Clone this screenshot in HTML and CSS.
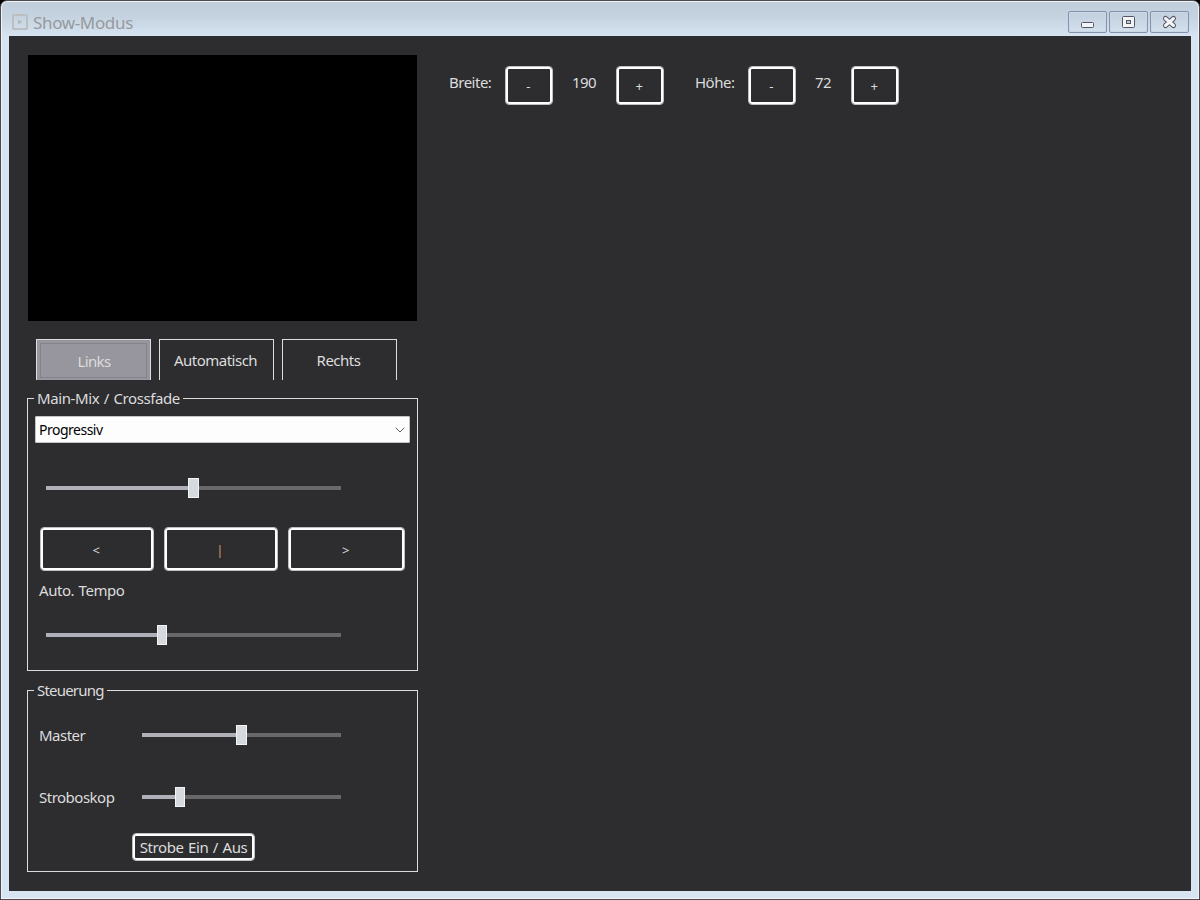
FILE: index.html
```html
<!DOCTYPE html>
<html lang="de">
<head>
    <meta charset="UTF-8">
    <meta name="viewport" content="width=device-width, initial-scale=1.0">
    <title>Show-Modus</title>
    <link rel="stylesheet" href="styles.css">
</head>
<body>
    <div class="window">
        <header class="titlebar">
            <svg class="app-icon" width="16" height="16" viewBox="0 0 16 16">
                <rect x="1" y="1" width="14" height="14" rx="1" fill="none" stroke="#bdbebf" stroke-width="2"/>
                <path d="M6 5.500v5l4.500-2.500z" fill="#b7b9bb"/>
            </svg>
            <h1>Show-Modus</h1>
            <div class="window-buttons">
                <button class="win-btn" aria-label="Minimieren">
                    <svg width="37" height="20" viewBox="0 0 37 20">
                        <rect x="12.500" y="10.500" width="12" height="5" rx="1" fill="#f4f4f4" stroke="#535666"/>
                    </svg>
                </button>
                <button class="win-btn" aria-label="Maximieren">
                    <svg width="37" height="20" viewBox="0 0 37 20">
                        <rect x="12.500" y="4.500" width="12" height="11" rx="1" fill="#f4f4f4" stroke="#535666"/>
                        <rect x="16.500" y="8.500" width="4" height="3" fill="#b9cbe0" stroke="#535666"/>
                    </svg>
                </button>
                <button class="win-btn" aria-label="Schließen">
                    <svg width="37" height="20" viewBox="0 0 37 20">
                        <path d="M14.500 6.500l8 7M22.500 6.500l-8 7" stroke="#535666" stroke-width="5" stroke-linecap="round"/>
                        <path d="M14.500 6.500l8 7M22.500 6.500l-8 7" stroke="#f4f4f4" stroke-width="3" stroke-linecap="round"/>
                    </svg>
                </button>
            </div>
        </header>

        <main class="client">
            <section class="left">
                <div class="preview"></div>

                <div class="tabs">
                    <button class="tab active"><span>Links</span></button>
                    <button class="tab">Automatisch</button>
                    <button class="tab">Rechts</button>
                </div>

                <fieldset class="group mix">
                    <legend>Main-Mix / Crossfade</legend>
                    <div class="combo">
                        <span>Progressiv</span>
                        <svg width="10" height="6" viewBox="0 0 10 6">
                            <path d="M.7.7L5 5 9.300.7" fill="none" stroke="#606060"/>
                        </svg>
                    </div>
                    <div class="slider fade">
                        <div class="fill" style="width: 142px"></div>
                        <div class="thumb wide"></div>
                        <div class="rest"></div>
                    </div>
                    <div class="fade-buttons">
                        <button class="btn">&lt;</button>
                        <button class="btn bar">|</button>
                        <button class="btn">&gt;</button>
                    </div>
                    <div class="label tempo-label">Auto. Tempo</div>
                    <div class="slider tempo">
                        <div class="fill" style="width: 111px"></div>
                        <div class="thumb"></div>
                        <div class="rest"></div>
                    </div>
                </fieldset>

                <fieldset class="group control">
                    <legend>Steuerung</legend>
                    <div class="row">
                        <span class="label">Master</span>
                        <div class="slider">
                            <div class="fill" style="width: 94px"></div>
                            <div class="thumb wide"></div>
                            <div class="rest"></div>
                        </div>
                    </div>
                    <div class="row">
                        <span class="label">Stroboskop</span>
                        <div class="slider">
                            <div class="fill" style="width: 33px"></div>
                            <div class="thumb"></div>
                            <div class="rest"></div>
                        </div>
                    </div>
                    <button class="btn strobe-btn">Strobe Ein / Aus</button>
                </fieldset>
            </section>

            <section class="size-bar">
                <span class="label">Breite:</span>
                <button class="btn">-</button>
                <span class="value">190</span>
                <button class="btn">+</button>
                <span class="label height-label">Höhe:</span>
                <button class="btn">-</button>
                <span class="value">72</span>
                <button class="btn">+</button>
            </section>
        </main>
    </div>
</body>
</html>
```

FILE: styles.css
```css
:root {
    --bg: #2d2d30;
    --text: #dcdcdc;
    --frame: #d7e4f2;
    --line: #dcdcdc;
}

* {
    box-sizing: border-box;
}

body {
    margin: 0;
    background: #000;
    color: var(--text);
    font-family: "Noto Sans", "Open Sans", sans-serif;
    font-size: 15px;
    line-height: 20px;
    letter-spacing: -0.5px;
    word-spacing: 1px;
    overflow: hidden;
}

button {
    font: inherit;
    color: inherit;
    letter-spacing: inherit;
    word-spacing: inherit;
    padding: 0;
    margin: 0;
    background: none;
}

.window {
    width: 1200px;
    height: 900px;
    padding: 0 7px 7px;
    border: 1px solid #4e4a4d;
    border-radius: 7px 7px 0 0;
    background: linear-gradient(#c0cddb 0, #c5d2e0 16px, var(--frame) 36px);
    box-shadow: inset 0 0 0 1px #f0f3f8;
}

.titlebar {
    display: flex;
    align-items: center;
    height: 35px;
    padding: 7px 2px 0 4px;
}

.app-icon {
    margin-top: -1px;
}

.titlebar h1 {
    margin: 2px 0 0 5px;
    font-size: 17px;
    font-weight: 400;
    letter-spacing: -0.35px;
    color: #969a9e;
}

.window-buttons {
    display: flex;
    gap: 2px;
    margin-left: auto;
    margin-right: 1px;
}

.win-btn {
    width: 39px;
    height: 22px;
    border: 1px solid #8492b0;
    border-radius: 2px;
    box-shadow: inset 0 0 0 1px #cbd7e4;
}

.win-btn svg {
    display: block;
}

.client {
    display: flex;
    align-items: flex-start;
    height: 855px;
    margin: 0 0 0 1px;
    width: 1182px;
    background: var(--bg);
}

.left {
    width: 391px;
    margin: 19px 0 0 18px;
}

.preview {
    height: 266px;
    margin: 0 1px;
    background: #000;
}

.tabs {
    display: flex;
    gap: 8px;
    margin: 18px 0 8px 9px;
}

.tab {
    width: 115px;
    height: 41px;
    padding-right: 2px;
    border: 1px solid var(--line);
    border-bottom: 0;
}

.tab.active {
    padding: 3px;
    background: #97959d;
    letter-spacing: -0.6px;
}

.tab.active span {
    display: block;
    height: 35px;
    padding: 7px 0 0 1px;
    border: 1px solid #84828a;
}

.group {
    min-width: 0;
    margin: 0;
    padding: 0 7px;
    border: 1px solid var(--line);
}

.group legend {
    height: 20px;
    margin-left: -1px;
    padding: 0 3px;
}

.mix {
    height: 283px;
}

.mix legend {
    letter-spacing: -0.4px;
}

.combo {
    display: flex;
    align-items: center;
    justify-content: space-between;
    height: 27px;
    margin-top: 8px;
    padding: 0 4px 0 3px;
    border: 1px solid #c4c4c4;
    border-radius: 1px;
    background: #fdfdfd;
    color: #000;
    font-size: 14px;
}

.slider {
    display: flex;
    align-items: center;
    width: 199px;
    height: 20px;
}

.fade,
.tempo {
    width: 295px;
    margin-left: 11px;
}

.fade {
    margin-top: 35px;
}

.fill {
    height: 4px;
    background: #b0b1b8;
}

.thumb {
    width: 10px;
    height: 20px;
    border: 1px solid #f3f4f6;
    background: #d6d9de;
}

.thumb.wide {
    width: 11px;
}

.rest {
    flex: 1;
    height: 4px;
    background: #68686b;
}

.btn {
    padding-right: 2px;
    border: 1px solid #c0c0c1;
    border-radius: 4px;
    box-shadow: inset 0 0 0 2px #fff;
    font-size: 13px;
}

.fade-buttons {
    display: grid;
    grid-template-columns: 114px 114px 117px;
    gap: 10px;
    margin: 29px 0 0 5px;
}

.fade-buttons .btn {
    height: 44px;
    padding-top: 2px;
}

.fade-buttons .bar {
    padding-right: 3px;
    color: #cf9a62;
}

.tempo-label {
    margin: 9px 0 0 4px;
    letter-spacing: -0.45px;
}

.tempo {
    margin-top: 25px;
}

.control {
    height: 192px;
    margin-top: 9px;
}

.control legend {
    letter-spacing: -0.8px;
}

.row {
    display: flex;
    align-items: center;
    height: 20px;
    margin-top: 42px;
}

.control legend + .row {
    margin-top: 25px;
}

.row .label {
    width: 107px;
    padding: 0 0 1px 4px;
}

.strobe-btn {
    display: block;
    width: 123px;
    height: 28px;
    margin: 26px 0 0 97px;
    padding-right: 0;
    font-size: 15px;
    letter-spacing: -0.4px;
}

.size-bar {
    display: grid;
    grid-template-columns: 56px 48px 63px 48px 84px 48px 55px 48px;
    margin: 30px 0 0 31px;
}

.size-bar .label,
.size-bar .value {
    padding-top: 6px;
}

.size-bar .btn {
    height: 39px;
}

.size-bar .value {
    padding-right: 1px;
    text-align: center;
}

.height-label {
    padding-left: 31px;
}
```
